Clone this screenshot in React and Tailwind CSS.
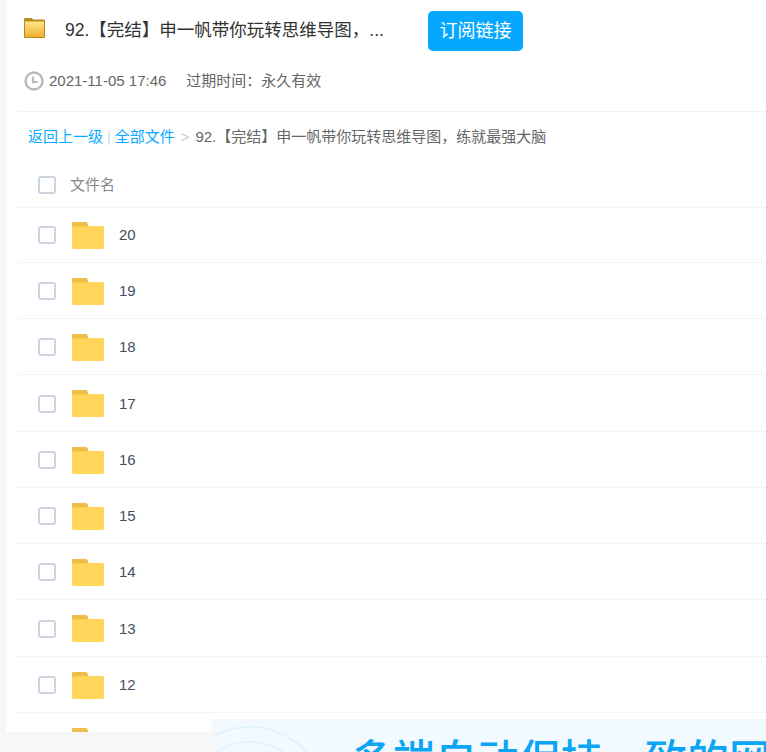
const cjk = { fontFamily: '"Liberation Sans", "Noto Sans CJK SC", sans-serif' };

function Folder() {
  return (
    <svg width="32" height="27" viewBox="0 0 32 27" className="shrink-0">
      <path d="M0 6V2a2 2 0 0 1 2-2h11.5a2 2 0 0 1 1.6 1l1.4 3v2z" fill="#efbd4b" />
      <path d="M0 6a2 2 0 0 1 2-2h28a2 2 0 0 1 2 2v19a2 2 0 0 1-2 2H2a2 2 0 0 1-2-2z" fill="#ffd659" />
      <path d="M0 4.5V2a2 2 0 0 1 2-2h11.5a2 2 0 0 1 1.6 1l1.4 3.5z" fill="#efbd4b" />
    </svg>
  );
}

function Check({ className = "" }) {
  return <span className={"block w-[18px] h-[18px] shrink-0 rounded-[3px] border-2 border-[#cbd4e2] bg-white " + className} />;
}

function Row({ name }) {
  return (
    <div className="h-[56.25px] flex items-center border-b border-[#f2f4f7] pl-5 shrink-0">
      <Check className="mt-[1.4px]" />
      <span className="ml-4 mt-[2px] flex"><Folder /></span>
      <span className="ml-[15px] mt-[2px] text-[15px] text-[#424e67]">{name}</span>
    </div>
  );
}

export default function App() {
  const names = ["20", "19", "18", "17", "16", "15", "14", "13", "12", "11"];
  return (
    <div className="relative w-[766px] h-[752px] overflow-hidden bg-[#f7f7f7]" style={cjk}>
      <div className="ml-[6px] h-[732px] overflow-hidden bg-white pl-3">
        <div className="h-[112px] border-b border-[#f1f1f1]">
          <div className="flex items-center h-[62px] pb-[2px] pl-[6px]">
            <svg width="21" height="20" viewBox="0 0 21 20" className="shrink-0 -mt-[5px]">
              <defs>
                <linearGradient id="tf" x1="0" y1="0" x2="0" y2="1">
                  <stop offset="0" stopColor="#ffe58a" />
                  <stop offset="1" stopColor="#eeb02f" />
                </linearGradient>
              </defs>
              <path d="M0 1a1 1 0 0 1 1-1h7l1 1.5h11a1 1 0 0 1 1 1V19a1 1 0 0 1-1 1H1a1 1 0 0 1-1-1z" fill="#b98a24" />
              <rect x="1" y="3.5" width="19" height="15.5" fill="url(#tf)" />
            </svg>
            <span className="ml-[20px] w-[320px] text-[17.5px] whitespace-nowrap overflow-hidden text-[#333]">92.【完结】申一帆带你玩转思维导图，...</span>
            <button className="ml-[43px] mt-[2px] w-[95px] h-[40px] rounded-[5px] bg-[#06a7ff] text-white text-[18px] flex items-center justify-center">订阅链接</button>
          </div>
          <div className="flex items-center h-[14px] mt-[12px] pl-[6px] text-[15px] text-[#666]">
            <svg width="20" height="20" viewBox="0 0 20 20" className="shrink-0">
              <circle cx="10" cy="10" r="8.5" fill="none" stroke="#b9b9b9" strokeWidth="2.4" />
              <path d="M9 5.5v5.5h4.5" fill="none" stroke="#b9b9b9" strokeWidth="2.2" />
            </svg>
            <span className="ml-[5px]">2021-11-05 17:46</span>
            <span className="ml-[20px]">过期时间：永久有效</span>
          </div>
        </div>
        <div className="h-[50px] pl-[10px] flex items-center text-[15px] whitespace-nowrap">
          <span className="text-[#09aaff]">返回上一级</span>
          <span className="text-[#c4dcf5] mx-[4px] text-sm">|</span>
          <span className="text-[#09aaff]">全部文件</span>
          <span className="text-[#c4cdd8] mx-[6px] text-[15px]">&gt;</span>
          <span className="text-[#666]">92.【完结】申一帆带你玩转思维导图，练就最强大脑</span>
        </div>
        <div className="h-[46px] flex items-center border-b border-[#f2f4f7] pl-5">
          <Check />
          <span className="ml-[14px] mt-[2px] text-[15px] text-[#888]">文件名</span>
        </div>
        <div className="flex flex-col -mt-[1.4px]">
          {names.map((n) => <Row key={n} name={n} />)}
        </div>
      </div>
      <div className="absolute left-[212px] right-0 top-[719px] bottom-0 overflow-hidden bg-[#f2faff]">
        <svg width="110" height="33" viewBox="0 0 110 33" className="absolute left-0 top-0">
          <circle cx="38" cy="85.5" r="77.5" fill="none" stroke="#dff2fc" strokeWidth="1.5" />
          <circle cx="38" cy="85.5" r="62.5" fill="none" stroke="#dff2fc" strokeWidth="1.5" />
        </svg>
        <div className="absolute left-[139px] top-[14px] text-[42px] leading-[56px] font-medium text-[#0aa5f5] whitespace-nowrap">多端自动保持一致的网</div>
      </div>
    </div>
  );
}
